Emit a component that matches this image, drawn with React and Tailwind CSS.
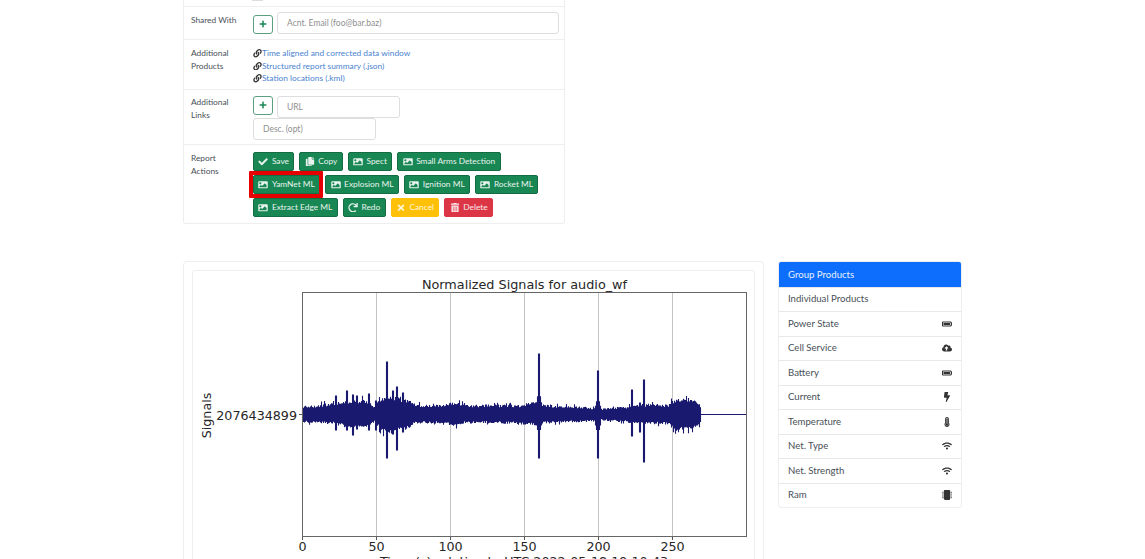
import React, { useMemo } from "react";
import {
  FaBatteryFull, FaBolt, FaCheck, FaCloudUploadAlt, FaCopy, FaImage, FaLink, FaMicrochip,
  FaPlus, FaRedo, FaThermometerFull, FaTimes, FaTrashAlt, FaWifi,
} from "react-icons/fa";

const green = "bg-[#198754] border-[#146c43] text-[#e8f3ee]";

const actionRows = [
  [
    { label: "Save", icon: FaCheck },
    { label: "Copy", icon: FaCopy },
    { label: "Spect", icon: FaImage },
    { label: "Small Arms Detection", icon: FaImage },
  ],
  [
    { label: "YamNet ML", icon: FaImage, marked: true },
    { label: "Explosion ML", icon: FaImage },
    { label: "Ignition ML", icon: FaImage },
    { label: "Rocket ML", icon: FaImage },
  ],
  [
    { label: "Extract Edge ML", icon: FaImage },
    { label: "Redo", icon: FaRedo },
    { label: "Cancel", icon: FaTimes, color: "bg-[#ffc107] border-[#ffc107] text-[#fff6d8]" },
    { label: "Delete", icon: FaTrashAlt, color: "bg-[#dc3545] border-[#dc3545] text-[#fbe9eb]" },
  ],
];

const products = [
  { label: "Individual Products" },
  { label: "Power State", icon: FaBatteryFull },
  { label: "Cell Service", icon: FaCloudUploadAlt },
  { label: "Battery", icon: FaBatteryFull },
  { label: "Current", icon: FaBolt },
  { label: "Temperature", icon: FaThermometerFull },
  { label: "Net. Type", icon: FaWifi },
  { label: "Net. Strength", icon: FaWifi },
  { label: "Ram", icon: FaMicrochip },
];

const links = ["Time aligned and corrected data window", "Structured report summary (.json)", "Station locations (.kml)"];

// [x pixel, amp up, amp down] control points of the waveform envelope
const envelope = [
  [302, 9, 8], [320, 10, 9], [335, 13, 10], [345, 15, 13], [368, 15, 14], [374, 9, 8], [382, 17, 17], [392, 19, 20],
  [408, 15, 15], [416, 10, 9], [445, 10, 9], [454, 13, 12], [465, 10, 9], [500, 10, 9], [520, 10, 10], [535, 13, 11],
  [545, 10, 9], [580, 8, 8], [600, 6, 6], [625, 8, 8], [650, 11, 10], [668, 10, 10], [676, 17, 17], [692, 15, 15], [700, 13, 13],
];

// [x pixel, up, down, half width of the core]
const spikes = [
  [387, 53, 44, 0.5], [376, 14, 16, 1], [397, 28, 36, 0.5], [393, 24, 20, 0.5], [369, 21, 16, 0.5], [347, 24, 16, 0.5],
  [353, 20, 21, 0.5], [357, 19, 15, 0.5], [336, 19, 16, 0.5], [403, 22, 18, 0.5],
  [539, 61, 44, 0.5], [598, 44, 44, 0.8], [632, 25, 22, 0.5], [644, 35, 48, 0.5], [640, 12, 18, 0.5],
];

function envelopeAt(x, side) {
  for (let i = 1; i < envelope.length; i++) {
    if (x <= envelope[i][0]) {
      const a = envelope[i - 1];
      const b = envelope[i];
      const f = (x - a[0]) / (b[0] - a[0]);
      return a[side] + (b[side] - a[side]) * f;
    }
  }
  return 8;
}

function wavePath() {
  let seed = 17;
  const rnd = () => {
    seed = (seed * 16807) % 2147483647;
    return seed / 2147483647;
  };
  let d = "";
  for (let x = 302.5; x <= 700.5; x += 1) {
    let up = envelopeAt(x, 1) * (0.72 + 0.28 * rnd());
    let down = envelopeAt(x, 2) * (0.72 + 0.28 * rnd());
    if (rnd() > 0.9) up *= 1.25;
    if (rnd() > 0.9) down *= 1.25;
    spikes.forEach(([sx, su, sd, w]) => {
      const dist = Math.abs(x - sx);
      if (dist <= w) {
        up = Math.max(up, su);
        down = Math.max(down, sd);
      } else if (su > 40 && dist < 3) {
        // big spikes taper into the body of the signal
        up = Math.max(up, su * (0.45 - dist * 0.1));
        down = Math.max(down, sd * (0.5 - dist * 0.1));
      }
    });
    d += `M${x} ${(414.5 - up).toFixed(1)}V${(414.5 + down).toFixed(1)}`;
  }
  return d;
}

function Chart() {
  const d = useMemo(wavePath, []);
  const ticks = [0, 50, 100, 150, 200, 250];
  return (
    <svg width="560" height="300" viewBox="193 271 560 300" className="block" fontFamily="'DejaVu Sans', sans-serif" fill="#262626">
      <text x="524.5" y="288.5" textAnchor="middle" fontSize="12.8">Normalized Signals for audio_wf</text>
      {ticks.slice(1).map(t => (
        <line key={t} x1={302.5 + t * 1.48} x2={302.5 + t * 1.48} y1="292" y2="537" stroke="#c4c4c4" strokeWidth="1" />
      ))}
      <path d={d} stroke="#191970" strokeWidth="1.1" fill="none" />
      <line x1="700" x2="746" y1="414.5" y2="414.5" stroke="#191970" strokeWidth="1" />
      <rect x="302.5" y="292.5" width="444" height="244" fill="none" stroke="#666666" strokeWidth="1" />
      {ticks.map(t => (
        <g key={t}>
          <line x1={302.5 + t * 1.48} x2={302.5 + t * 1.48} y1="537" y2="540" stroke="#555555" />
          <text x={302.5 + t * 1.48} y="551" textAnchor="middle" fontSize="12.7">{t}</text>
        </g>
      ))}
      <line x1="299" x2="302" y1="414.5" y2="414.5" stroke="#555555" />
      <text x="297" y="420" textAnchor="end" fontSize="12.7">2076434899</text>
      <text x="0" y="0" textAnchor="middle" fontSize="12.7" transform="translate(210.5 415.5) rotate(-90)">Signals</text>
      <text x="524" y="566" textAnchor="middle" fontSize="12.7">Time (s) relative to UTC 2022-05-18 19:10:43</text>
    </svg>
  );
}

function Row({ label, children, className = "", labelClass = "pt-[7px]" }) {
  return (
    <div className={`flex border-b border-[#eeeeee] ${className}`}>
      <div className={`w-[63px] shrink-0 pl-[7px] leading-[12.5px] ${labelClass}`}>{label}</div>
      <div className="min-w-0 flex-1 pl-[6px] pr-[5px]">{children}</div>
    </div>
  );
}

function TextInput({ placeholder, className = "" }) {
  return (
    <input
      placeholder={placeholder}
      className={`h-[22px] rounded-[3px] border border-[#dedede] bg-white px-[9px] text-[8.5px] outline-none placeholder:text-[#8f8f8f] ${className}`}
    />
  );
}

function PlusButton() {
  return (
    <button className="flex h-[18.5px] w-[20px] shrink-0 items-center justify-center rounded-[3px] border border-[#5a9f80] text-[#198754]">
      <FaPlus className="h-[8px] w-[8px]" />
    </button>
  );
}

function ActionButton({ label, icon: Icon, color = green, marked }) {
  return (
    <button className={`relative flex h-[18.5px] items-center gap-[3.5px] whitespace-nowrap rounded-[2px] border pl-[4.4px] pr-[4.3px] text-[8.35px] ${color}`}>
      <Icon className="h-[9.5px] w-[10px] shrink-0" />
      <span>{label}</span>
      {marked && <span className="absolute -left-[5px] -right-[4px] -top-[5px] -bottom-[5px] rounded-[1px] border-[4px] border-[#e60000]" />}
    </button>
  );
}

export default function App() {
  return (
    <div className="h-[559px] overflow-hidden bg-white text-[#495057]" style={{ fontFamily: "Lato, 'Liberation Sans', sans-serif" }}>
      <div className="ml-[183px] w-[382px] rounded-b-[3px] border-x border-b border-[#eeeeee] text-[8.35px]">
        <div className="h-[7px] border-b border-[#eeeeee] pl-[68px]">
          <div className="h-[1px] w-[11px] bg-[#dddddd]" />
        </div>
        <Row label="Shared With" className="h-[33px]">
          <div className="flex gap-[4px] pt-[5px]">
            <div className="pt-[3px]"><PlusButton /></div>
            <TextInput placeholder="Acnt. Email (foo@bar.baz)" className="min-w-0 flex-1" />
          </div>
        </Row>
        <Row label={<>Additional<br />Products</>} className="h-[50px]">
          <div className="pt-[7px] leading-[12.5px] text-[#4b84cf]">
            {links.map(link => (
              <div key={link} className="flex items-center">
                <FaLink className="h-[8.5px] w-[9px] shrink-0 text-[#333333]" />
                <a>{link}</a>
              </div>
            ))}
          </div>
        </Row>
        <Row label={<>Additional<br />Links</>} className="h-[55px]" labelClass="pt-[6px]">
          <div className="pt-[6px]">
            <div className="flex gap-[4px]">
              <PlusButton />
              <TextInput placeholder="URL" className="w-[123px]" />
            </div>
            <TextInput placeholder="Desc. (opt)" className="block w-[123px]" />
          </div>
        </Row>
        <div className="flex h-[78px]">
          <div className="w-[63px] shrink-0 pl-[7px] pt-[7px] leading-[12.5px]">Report<br />Actions</div>
          <div className="flex flex-col gap-[4.5px] pl-[6px] pt-[7px]">
            {actionRows.map((row, i) => (
              <div key={i} className="flex gap-[5px]">
                {row.map(btn => <ActionButton key={btn.label} {...btn} />)}
              </div>
            ))}
          </div>
        </div>
      </div>

      <div className="ml-[183px] mt-[37px] flex items-start gap-[14px]">
        <div className="w-[581px] shrink-0 rounded-[4px] border border-[#eeeeee] p-[8px]">
          <div className="rounded-[3px] border border-[#eeeeee]">
            <Chart />
          </div>
        </div>
        <div className="w-[184px] overflow-hidden rounded-[3px] border border-[#eeeeee] text-[9.6px]">
          <div className="flex h-[24.5px] items-center bg-[#0d6efd] pl-[9px] pt-[1px] text-[#e6f0ff]">Group Products</div>
          {products.map(({ label, icon: Icon }) => (
            <div key={label} className="flex h-[24.5px] items-center justify-between border-t border-[#e8e8e8] pl-[9px] pr-[9px] first:border-t-0">
              <span>{label}</span>
              {Icon && <Icon className="h-[10px] w-[10px] text-[#333333]" />}
            </div>
          ))}
        </div>
      </div>
    </div>
  );
}
